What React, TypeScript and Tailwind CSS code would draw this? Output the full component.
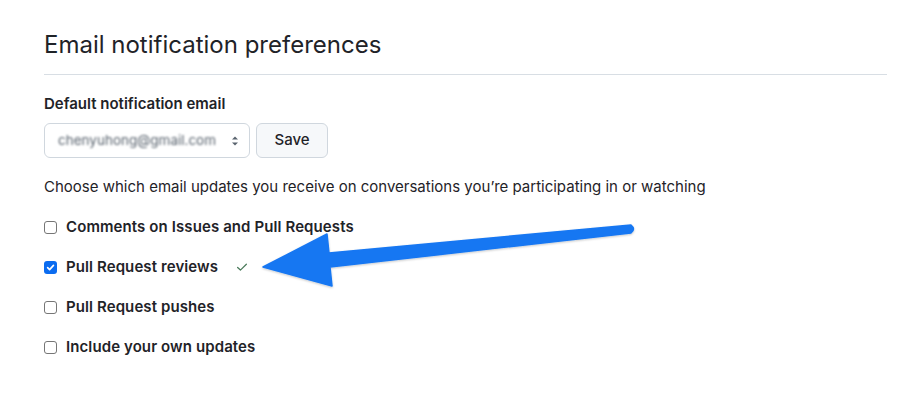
import React from "react";

const font = { fontFamily: 'Inter, "Liberation Sans", Arial, sans-serif' };

function Row({ label, checked, extra }: { label: string; checked?: boolean; extra?: boolean }) {
  return (
    <div className="flex items-center h-[40px]">
      {checked ? (
        <span className="w-[13px] h-[13px] rounded-[3px] bg-[#0b6cf0] flex items-center justify-center">
          <svg width="9" height="9" viewBox="0 0 10 10">
            <path d="M1.8 5.2 L4 7.4 L8.3 2.6" fill="none" stroke="#fff" strokeWidth="1.8" strokeLinecap="round" strokeLinejoin="round" />
          </svg>
        </span>
      ) : (
        <span className="w-[13px] h-[13px] rounded-[3px] border border-[#767676] bg-white" />
      )}
      <span className="ml-[9px] text-[15px] font-semibold tracking-[0.1px] text-[#1f2328]">{label}</span>
      {extra && (
        <svg className="ml-[17px]" width="14" height="14" viewBox="0 0 16 16">
          <path d="M3 8.5 L6.2 11.5 L13 4.8" fill="none" stroke="#4a7a5a" strokeWidth="1.4" strokeLinecap="round" strokeLinejoin="round" />
        </svg>
      )}
    </div>
  );
}

export default function App() {
  return (
    <div className="relative w-[905px] h-[402px] bg-white overflow-hidden" style={font}>
      <div className="pl-[44px] pr-[18px] pt-[29px]">
        <h2 className="text-[24px] leading-[32px] font-normal text-[#1f2328]">Email notification preferences</h2>
        <div className="mt-[13px] h-px bg-[#d8dee4]" />
        <div className="mt-[18px] text-[15px] leading-[22px] font-semibold text-[#1f2328]">Default notification email</div>
        <div className="mt-[8px] flex gap-[6px]">
          <div className="w-[206px] h-[35px] rounded-[6px] border border-[#d0d7de] bg-white flex items-center pl-[13px] pr-[9px]">
            <span className="text-[13.5px] text-[#59636e] blur-[1px]">chenyuhong@gmail.com</span>
            <svg className="ml-auto" width="10" height="14" viewBox="0 0 10 14">
              <path d="M2 5.5 L5 2.5 L8 5.5 Z" fill="#59636e" />
              <path d="M2 8.5 L5 11.5 L8 8.5 Z" fill="#59636e" />
            </svg>
          </div>
          <button className="w-[72px] h-[35px] rounded-[6px] border border-[#d0d7de] bg-[#f6f8fa] text-[15px] font-medium text-[#1f2328]">Save</button>
        </div>
        <p className="mt-[18px] text-[15px] leading-[22px] text-[#1f2328]">
          Choose which email updates you receive on conversations you’re participating in or watching
        </p>
        <div className="mt-[9px]">
          <Row label="Comments on Issues and Pull Requests" />
          <Row label="Pull Request reviews" checked extra />
          <Row label="Pull Request pushes" />
          <Row label="Include your own updates" />
        </div>
      </div>
      <svg className="absolute left-0 top-0 pointer-events-none" width="905" height="402" viewBox="0 0 905 402">
        <defs>
          <filter id="sh" x="-20%" y="-50%" width="140%" height="200%">
            <feDropShadow dx="0" dy="1" stdDeviation="1.2" floodColor="#000" floodOpacity="0.22" />
          </filter>
        </defs>
        <path
          d="M329 253 L631 225 Q636 229 631 233 L330 267 L332 286 L263 267 L327 234 Z"
          fill="#1677f2"
          stroke="#1677f2"
          strokeWidth="1.5"
          strokeLinejoin="round"
          filter="url(#sh)"
        />
      </svg>
    </div>
  );
}
